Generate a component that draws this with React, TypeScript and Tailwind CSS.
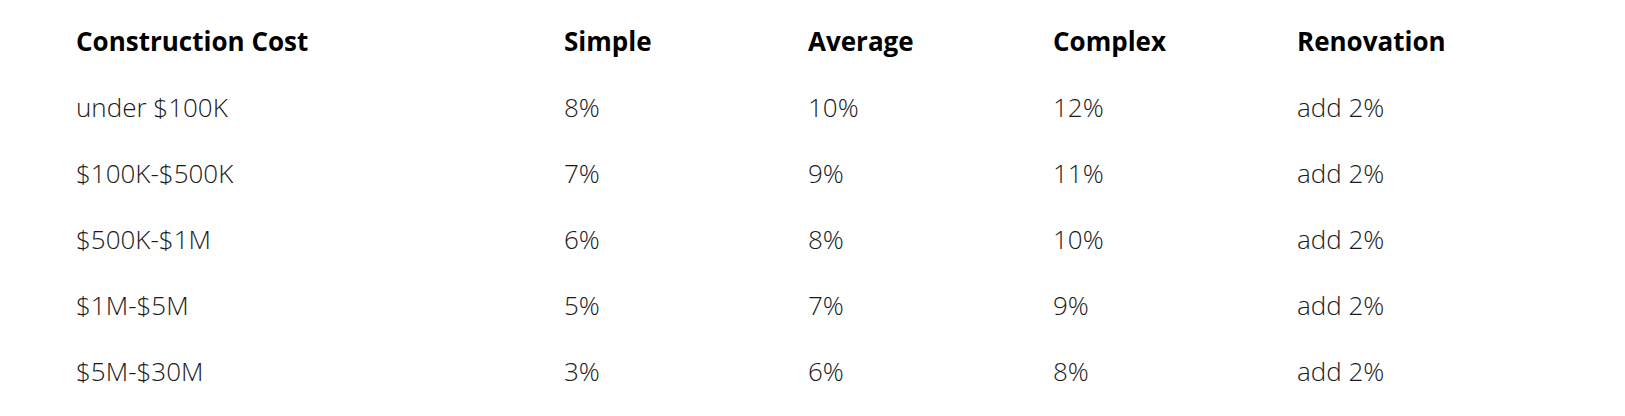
import React from "react";

const rows = [
  ["under $100K", "8%", "10%", "12%", "add 2%"],
  ["$100K-$500K", "7%", "9%", "11%", "add 2%"],
  ["$500K-$1M", "6%", "8%", "10%", "add 2%"],
  ["$1M-$5M", "5%", "7%", "9%", "add 2%"],
  ["$5M-$30M", "3%", "6%", "8%", "add 2%"],
];

const header = ["Construction Cost", "Simple", "Average", "Complex", "Renovation"];

export default function App() {
  return (
    <div
      className="w-[1625px] h-[416px] bg-white pl-[76px] pt-[8px]"
      style={{ fontFamily: '"Open Sans", sans-serif' }}
    >
      <div className="grid grid-cols-[488px_244px_245px_244px_244px]">
        {header.map((h) => (
          <div key={h} className="h-[66px] flex items-center text-[26px] font-bold text-black">
            {h}
          </div>
        ))}
        {rows.map((r, i) =>
          r.map((c, j) => (
            <div
              key={`${i}-${j}`}
              className="h-[66px] flex items-center text-[26px] font-light text-[#1a1a1a]"
            >
              {c}
            </div>
          ))
        )}
      </div>
    </div>
  );
}
